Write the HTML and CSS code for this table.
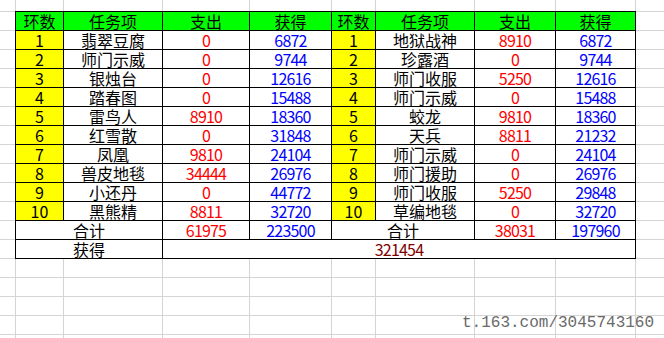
FILE: index.html
```html
<!DOCTYPE html>
<html lang="zh-CN">
<head>
<meta charset="utf-8">
<title>环数任务</title>
<link rel="stylesheet" href="styles.css">
</head>
<body>
<div class="sheet">
  <div class="tbl">
    <div class="c hd">环数</div><div class="c hd">任务项</div><div class="c hd">支出</div><div class="c hd">获得</div>
    <div class="c hd">环数</div><div class="c hd">任务项</div><div class="c hd">支出</div><div class="c hd">获得</div>

    <div class="c no">1</div><div class="c">翡翠豆腐</div><div class="c n red">0</div><div class="c n blue">6872</div>
    <div class="c no">1</div><div class="c">地狱战神</div><div class="c n red">8910</div><div class="c n blue">6872</div>

    <div class="c no">2</div><div class="c">师门示威</div><div class="c n red">0</div><div class="c n blue">9744</div>
    <div class="c no">2</div><div class="c">珍露酒</div><div class="c n red">0</div><div class="c n blue">9744</div>

    <div class="c no">3</div><div class="c">银烛台</div><div class="c n red">0</div><div class="c n blue">12616</div>
    <div class="c no">3</div><div class="c">师门收服</div><div class="c n red">5250</div><div class="c n blue">12616</div>

    <div class="c no">4</div><div class="c">踏春图</div><div class="c n red">0</div><div class="c n blue">15488</div>
    <div class="c no">4</div><div class="c">师门示威</div><div class="c n red">0</div><div class="c n blue">15488</div>

    <div class="c no">5</div><div class="c">雷鸟人</div><div class="c n red">8910</div><div class="c n blue">18360</div>
    <div class="c no">5</div><div class="c">蛟龙</div><div class="c n red">9810</div><div class="c n blue">18360</div>

    <div class="c no">6</div><div class="c">红雪散</div><div class="c n red">0</div><div class="c n blue">31848</div>
    <div class="c no">6</div><div class="c">天兵</div><div class="c n red">8811</div><div class="c n blue">21232</div>

    <div class="c no">7</div><div class="c">凤凰</div><div class="c n red">9810</div><div class="c n blue">24104</div>
    <div class="c no">7</div><div class="c">师门示威</div><div class="c n red">0</div><div class="c n blue">24104</div>

    <div class="c no">8</div><div class="c">兽皮地毯</div><div class="c n red">34444</div><div class="c n blue">26976</div>
    <div class="c no">8</div><div class="c">师门援助</div><div class="c n red">0</div><div class="c n blue">26976</div>

    <div class="c no">9</div><div class="c">小还丹</div><div class="c n red">0</div><div class="c n blue">44772</div>
    <div class="c no">9</div><div class="c">师门收服</div><div class="c n red">5250</div><div class="c n blue">29848</div>

    <div class="c no">10</div><div class="c">黑熊精</div><div class="c n red">8811</div><div class="c n blue">32720</div>
    <div class="c no">10</div><div class="c">草编地毯</div><div class="c n red">0</div><div class="c n blue">32720</div>

    <div class="c span2">合计</div><div class="c n red">61975</div><div class="c n blue">223500</div>
    <div class="c span2">合计</div><div class="c n red">38031</div><div class="c n blue">197960</div>

    <div class="c span2">获得</div><div class="c n span6 total">321454</div>
  </div>
  <div class="mark">t.163.com/3045743160</div>
</div>
</body>
</html>
```

FILE: styles.css
```css
html, body {
  margin: 0;
  padding: 0;
  background: #fff;
}

.sheet {
  position: relative;
  width: 664px;
  height: 338px;
  overflow: hidden;
  box-sizing: border-box;
  padding: 11px 0 0 15px;
  font-family: "Noto Sans CJK SC", "Noto Sans", sans-serif;
  font-size: 16px;
  color: #000;
  background-color: #fff;
  background-image:
    linear-gradient(#d4d4d4, #d4d4d4),
    linear-gradient(#d4d4d4, #d4d4d4),
    linear-gradient(#d4d4d4, #d4d4d4),
    linear-gradient(#d4d4d4, #d4d4d4),
    linear-gradient(#d4d4d4, #d4d4d4),
    linear-gradient(#d4d4d4, #d4d4d4),
    linear-gradient(#d4d4d4, #d4d4d4),
    linear-gradient(#d4d4d4, #d4d4d4),
    linear-gradient(#d4d4d4, #d4d4d4),
    linear-gradient(to bottom, #d4d4d4 1px, transparent 1px);
  background-size:
    1px 100%, 1px 100%, 1px 100%, 1px 100%, 1px 100%,
    1px 100%, 1px 100%, 1px 100%, 1px 100%,
    100% 19px;
  background-position:
    15px 0, 63px 0, 162px 0, 249px 0, 331px 0,
    375px 0, 474px 0, 555px 0, 635px 0,
    0 11px;
  background-repeat:
    no-repeat, no-repeat, no-repeat, no-repeat, no-repeat,
    no-repeat, no-repeat, no-repeat, no-repeat,
    repeat;
}

.tbl {
  display: grid;
  grid-template-columns: 48px 99px 87px 82px 44px 99px 81px 80px;
  grid-auto-rows: 19px;
  width: 621px;
  box-sizing: border-box;
  border-left: 1px solid #000;
  border-top: 1px solid #000;
}

.c {
  box-sizing: border-box;
  border-right: 1px solid #000;
  border-bottom: 1px solid #000;
  background: #fff;
  display: flex;
  align-items: flex-end;
  justify-content: center;
  line-height: 18px;
  white-space: nowrap;
}

.hd {
  background: #00ff00;
}

.no {
  background: #ffff00;
}

.n {
  letter-spacing: -0.8px;
}

.red {
  color: #ff0000;
}

.blue {
  color: #0000ff;
}

.total {
  color: #800000;
}

.span2 {
  grid-column: span 2;
}

.span6 {
  grid-column: span 6;
}

.mark {
  position: absolute;
  left: 462px;
  top: 315px;
  font-family: "Liberation Mono", "DejaVu Sans Mono", monospace;
  font-size: 16px;
  line-height: 16px;
  color: #6a6a6a;
  text-shadow: 0 0 1px #fff;
  white-space: nowrap;
}
```
